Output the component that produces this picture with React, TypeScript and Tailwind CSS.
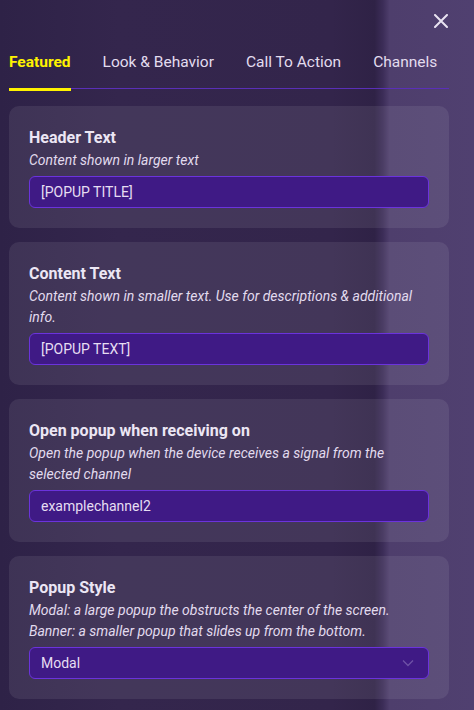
import React from "react";

function Card({
  title,
  desc,
  value,
  select,
}: {
  title: string;
  desc: React.ReactNode;
  value: string;
  select?: boolean;
}) {
  return (
    <div className="rounded-[10px] bg-white/[0.08] px-5 pt-5 pb-5">
      <div className="text-[16px] leading-[24px] font-bold text-[#ece6f4]">{title}</div>
      <div className="text-[14px] leading-[21px] italic text-[#e2dbee]">{desc}</div>
      <div className="mt-[5px] flex h-8 items-center justify-between rounded-[6px] border border-[#6b33dc] bg-[#3f1a85] pl-[11px] pr-3">
        <span className="text-[14px] text-[#e6def2]">{value}</span>
        {select && (
          <svg width="12" height="8" viewBox="0 0 12 8" fill="none" className="mr-[2px]">
            <path d="M1 1.5 L6 6.5 L11 1.5" stroke="#6e52a6" strokeWidth="1.3" />
          </svg>
        )}
      </div>
    </div>
  );
}

export default function App() {
  return (
    <div
      className="relative h-[710px] w-[474px] overflow-hidden bg-[linear-gradient(90deg,#2e2247_0%,#34264d_25%,#33254b_70%,#2f2246_79%,#3c2d58_80.8%,#4e3e6c_82.2%,#504070_100%)]"
      style={{ fontFamily: "Roboto, 'Noto Sans', sans-serif" }}
    >
      <button className="absolute right-[26px] top-[14px]">
        <svg width="14" height="14" viewBox="0 0 14 14" fill="none">
          <path d="M1 1 L13 13 M13 1 L1 13" stroke="#e9e3f1" strokeWidth="2" strokeLinecap="round" />
        </svg>
      </button>
      <div className="px-[9px] pr-[25px]">
        <div className="mt-[50px] flex h-[39px] items-start whitespace-nowrap border-b border-[#5a2fb8]">
          <div className="relative flex h-[39px] items-start">
            <span className="text-[15.5px] leading-[24px] font-bold text-[#fff200]">Featured</span>
            <div className="absolute bottom-[-2px] left-0 right-0 h-[3px] bg-[#fff200]" />
          </div>
          <span className="ml-[32px] text-[15.5px] leading-[24px] font-normal text-[#e3dcef]">Look &amp; Behavior</span>
          <span className="ml-[32px] text-[15.5px] leading-[24px] font-normal text-[#e3dcef]">Call To Action</span>
          <span className="ml-[32px] text-[15.5px] leading-[24px] font-normal text-[#e3dcef]">Channels</span>
        </div>
        <div className="mt-[17px] flex flex-col gap-[14px]">
          <Card title="Header Text" desc="Content shown in larger text" value="[POPUP TITLE]" />
          <Card
            title="Content Text"
            desc="Content shown in smaller text. Use for descriptions & additional info."
            value="[POPUP TEXT]"
          />
          <Card
            title="Open popup when receiving on"
            desc="Open the popup when the device receives a signal from the selected channel"
            value="examplechannel2"
          />
          <Card
            title="Popup Style"
            desc={
              <>
                Modal: a large popup the obstructs the center of the screen.
                <br />
                Banner: a smaller popup that slides up from the bottom.
              </>
            }
            value="Modal"
            select
          />
        </div>
      </div>
    </div>
  );
}
